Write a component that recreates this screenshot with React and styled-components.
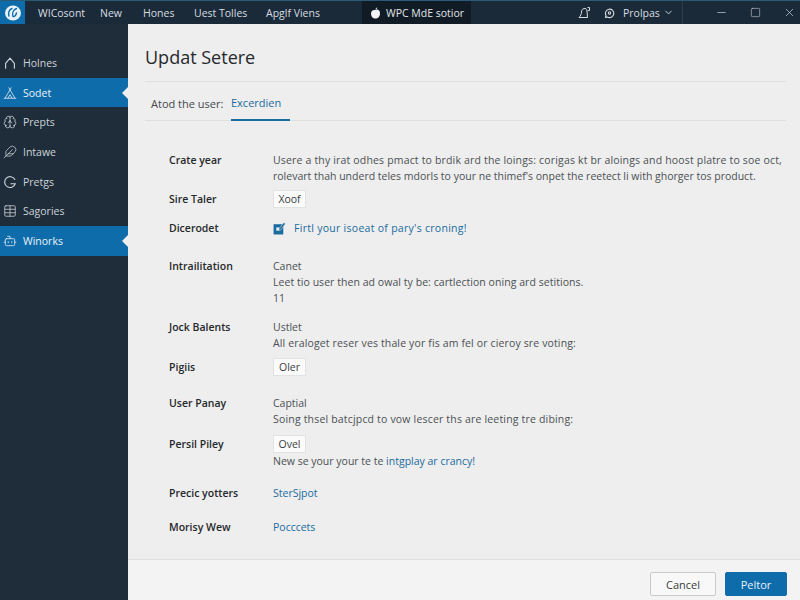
import styled, { createGlobalStyle } from 'styled-components';
import { Bot, Brain, ChevronDown, Feather, Minus, Square, Table, Tent, X } from 'lucide-react';

const GlobalStyle = createGlobalStyle`
  html, body {
    margin: 0;
    padding: 0;
    height: 100%;
    overflow: hidden;
  }
  body {
    font-family: "Open Sans", "Noto Sans", "Liberation Sans", sans-serif;
    background: #eeeeee;
  }
`;

const Shell = styled.div`
  width: 800px;
  height: 600px;
  display: flex;
  flex-direction: column;
  overflow: hidden;
`;

const TopBar = styled.header`
  height: 24px;
  flex: none;
  box-sizing: border-box;
  display: flex;
  align-items: stretch;
  background: #1b2a38;
  border-top: 1px solid #2a5a76;
  color: #d6dde3;
  font-size: 10.5px;
`;

const LogoBox = styled.div`
  width: 25px;
  flex: none;
  background: #0f6cab;
  display: flex;
  align-items: center;
  justify-content: center;
`;

const TopMenu = styled.nav`
  display: flex;
  flex: none;
  align-items: center;
  padding-left: 13px;
  width: 337px;
  box-sizing: border-box;
`;

const TopLink = styled.span`
  width: ${p => p.$w}px;
  white-space: nowrap;
`;

const DarkTab = styled.div`
  width: 109px;
  flex: none;
  background: #101b26;
  display: flex;
  align-items: center;
  gap: 5px;
  padding-left: 8px;
  box-sizing: border-box;
  white-space: nowrap;
  color: #e2e7eb;
`;

const TopRight = styled.div`
  flex: 1;
  display: flex;
  align-items: center;
  padding-left: 107px;
  color: #d6dde3;
`;

const IconSlot = styled.span`
  display: flex;
  margin-left: ${p => p.$left || 0}px;
`;

const ProfileName = styled.span`
  margin-left: 8px;
  white-space: nowrap;
`;

const BarDivider = styled.span`
  align-self: stretch;
  width: 1px;
  background: #2b3c4b;
  margin-left: 8px;
`;

const WindowButtons = styled.div`
  display: flex;
  align-items: center;
  margin-left: 32px;
  gap: 22px;
`;

const Body = styled.div`
  flex: 1;
  display: flex;
  min-height: 0;
`;

const Sidebar = styled.aside`
  width: 128px;
  flex: none;
  background: #1f2c39;
  padding-top: 24px;
  box-sizing: border-box;
`;

const SideItem = styled.div`
  position: relative;
  height: 29.7px;
  display: flex;
  align-items: center;
  gap: 6px;
  padding-left: 3px;
  font-size: 10.5px;
  color: ${p => (p.$active ? '#e8f2f9' : '#ccd4da')};
  background: ${p => (p.$active ? '#0f6cab' : 'transparent')};

  ${p => p.$active && `
    &::after {
      content: '';
      position: absolute;
      right: 0;
      top: 50%;
      margin-top: -6px;
      border: 6px solid transparent;
      border-right-color: #eeeeee;
      border-left-width: 0;
    }
  `}
`;

const Main = styled.main`
  flex: 1;
  display: flex;
  flex-direction: column;
  min-width: 0;
`;

const Content = styled.div`
  flex: 1;
  padding: 0 14px 0 17px;
  min-height: 0;
`;

const Title = styled.h1`
  margin: 0;
  height: 58px;
  display: flex;
  align-items: center;
  padding-top: 9px;
  box-sizing: border-box;
  font-size: 18px;
  font-weight: 400;
  color: #26292c;
  border-bottom: 1px solid #dfdfdf;
`;

const Tabs = styled.div`
  height: 39px;
  box-sizing: border-box;
  display: flex;
  align-items: stretch;
  border-bottom: 1px solid #dfdfdf;
  font-size: 11px;
`;

const TabLabel = styled.span`
  width: 86px;
  padding: 4px 0 0 6px;
  box-sizing: border-box;
  display: flex;
  align-items: center;
  color: #44484b;
`;

const ActiveTab = styled.span`
  width: 59px;
  box-sizing: content-box;
  padding-top: 4px;
  display: flex;
  align-items: center;
  color: #1a6b9e;
  border-bottom: 2px solid #1a6b9e;
  margin-bottom: -1px;
`;

const Form = styled.div`
  padding: 31px 0 0 24px;
  font-size: 10.5px;
`;

const Row = styled.div`
  display: grid;
  grid-template-columns: 104px 1fr;
  margin-top: ${p => p.$top || 0}px;
`;

const Label = styled.div`
  color: #25282b;
  font-weight: 600;
  line-height: 16px;
  white-space: nowrap;
  padding-top: ${p => p.$pad || 0}px;
`;

const Value = styled.div`
  color: #4c5054;
  line-height: 16px;
  white-space: nowrap;
`;

const Line = styled.span`
  display: block;
  letter-spacing: ${p => p.$ls || 0}px;
`;

const SmallBox = styled.span`
  display: inline-flex;
  align-items: center;
  justify-content: center;
  width: 33px;
  height: 18px;
  background: #fbfbfb;
  border: 1px solid #e2e2e2;
  box-sizing: border-box;
  color: #3b3e41;
`;

const LinkText = styled.span`
  color: #1a6b9e;
`;

const IconLink = styled.div`
  display: flex;
  align-items: center;
  gap: 8px;
  line-height: 16px;
  color: #1a6b9e;
  letter-spacing: 0.28px;
`;

const Footer = styled.footer`
  height: 41px;
  flex: none;
  background: #f3f3f3;
  border-top: 1px solid #dedede;
  display: flex;
  align-items: flex-start;
  justify-content: flex-end;
  gap: 9px;
  padding: 12px 13px 0 0;
  box-sizing: border-box;
`;

const Button = styled.button`
  width: ${p => p.$w}px;
  height: 24px;
  font: inherit;
  font-size: 11px;
  padding: 0;
  border-radius: 2px;
  border: 1px solid ${p => (p.$primary ? '#0f6cab' : '#c9c9c9')};
  background: ${p => (p.$primary ? '#0f6cab' : '#f8f8f8')};
  color: ${p => (p.$primary ? '#e6f1f8' : '#3a3d40')};
`;

const Logo = () => (
  <svg width="18" height="18" viewBox="0 0 18 18" fill="none">
    <ellipse cx="9" cy="9" rx="8" ry="7.5" fill="#e8f2f9" />
    <path d="M8 4.500C5 5.500 4 9 5 12" stroke="#0f6cab" strokeWidth="1.4" strokeLinecap="round" />
    <path d="M12.500 4.500C9 6 8 9.500 9 12.500C10.500 13 12 11 12.500 9" stroke="#0f6cab" strokeWidth="1.4" strokeLinecap="round" />
  </svg>
);

const HomeIcon = () => (
  <svg width="14" height="14" viewBox="0 0 16 16" fill="none" stroke="#ccd4da" strokeWidth="1.3">
    <path d="M3 14V8.500L8 2.500L13 8.500V14" strokeLinecap="round" strokeLinejoin="round" />
  </svg>
);

const RingIcon = () => (
  <svg width="14" height="14" viewBox="0 0 16 16" fill="none" stroke="#ccd4da" strokeWidth="1.3">
    <path d="M13.500 5A6.200 6.200 0 1 0 14 10L9 10" strokeLinecap="round" />
  </svg>
);

const BellNote = () => (
  <svg width="13" height="13" viewBox="0 0 13 13" fill="none" stroke="#d6dde3" strokeWidth="1">
    <path d="M1 11.500H9.500L9 5C9 3 7.500 2 6 2.500C4.500 3 3.500 4 3.500 6C3.500 8 2.500 10 1 11.500Z" strokeLinejoin="round" />
    <path d="M9.500 1.500H11.500V4.500H10" />
  </svg>
);

const ChatRing = () => (
  <svg width="12" height="12" viewBox="0 0 12 12" fill="none" stroke="#d6dde3" strokeWidth="1.1">
    <path d="M2.500 10.500L3 8.500A4.200 4.200 0 1 1 4.500 10Z" strokeLinejoin="round" />
    <circle cx="6.500" cy="6" r="1.200" />
  </svg>
);

const AppMark = () => (
  <svg width="11" height="12" viewBox="0 0 11 12" fill="#f2f4f6">
    <path d="M5.500 3C7 2 10 2.500 10 6.500C10 9.500 8 11.500 5.500 11.500C3 11.500 1 9.500 1 6.500C1 3.500 3.500 2.500 5.500 3Z" />
    <path d="M5.500 2.500C5.500 1.500 6.200 .7 7.200 .5C7.200 1.500 6.500 2.300 5.500 2.500Z" />
  </svg>
);

const EditSquare = () => (
  <svg width="13" height="14" viewBox="0 0 12 13">
    <rect x="0.500" y="3" width="9" height="9.500" fill="#1a6b9e" />
    <rect x="3" y="6" width="3" height="3" fill="#eeeeee" />
    <path d="M5 8L10 1.500L11.500 2.500L7 8.500Z" fill="#1a6b9e" stroke="#eeeeee" strokeWidth=".5" />
  </svg>
);

const menu = [
  { label: 'Holnes', icon: <HomeIcon /> },
  { label: 'Sodet', icon: <Tent size={14} strokeWidth={1.3} />, active: true },
  { label: 'Prepts', icon: <Brain size={14} strokeWidth={1.3} /> },
  { label: 'Intawe', icon: <Feather size={14} strokeWidth={1.3} /> },
  { label: 'Pretgs', icon: <RingIcon /> },
  { label: 'Sagories', icon: <Table size={14} strokeWidth={1.3} /> },
  { label: 'Winorks', icon: <Bot size={14} strokeWidth={1.3} />, active: true },
];

export default function App() {
  return (
    <Shell>
      <GlobalStyle />
      <TopBar>
        <LogoBox><Logo /></LogoBox>
        <TopMenu>
          <TopLink $w={62}>WICosont</TopLink>
          <TopLink $w={43}>New</TopLink>
          <TopLink $w={51}>Hones</TopLink>
          <TopLink $w={72}>Uest Tolles</TopLink>
          <TopLink $w={60}>Apglf Viens</TopLink>
        </TopMenu>
        <DarkTab><AppMark />WPC MdE sotior</DarkTab>
        <TopRight>
          <BellNote />
          <IconSlot $left={12}><ChatRing /></IconSlot>
          <ProfileName>Prolpas</ProfileName>
          <IconSlot $left={3}><ChevronDown size={11} /></IconSlot>
          <BarDivider />
          <WindowButtons>
            <Minus size={13} strokeWidth={1.2} />
            <Square size={11} strokeWidth={1.2} />
            <X size={13} strokeWidth={1.2} />
          </WindowButtons>
        </TopRight>
      </TopBar>
      <Body>
        <Sidebar>
          {menu.map(item => (
            <SideItem key={item.label} $active={item.active}>
              {item.icon}
              {item.label}
            </SideItem>
          ))}
        </Sidebar>
        <Main>
          <Content>
            <Title>Updat Setere</Title>
            <Tabs>
              <TabLabel>Atod the user:</TabLabel>
              <ActiveTab>Excerdien</ActiveTab>
            </Tabs>
            <Form>
              <Row>
                <Label>Crate year</Label>
                <Value>
                  <Line $ls={0.17}>Usere a thy irat odhes pmact to brdik ard the loings: corigas kt br aloings and hoost platre to soe oct,</Line>
                  <Line>rolevart thah underd teles mdorls to your ne thimef's onpet the reetect li with ghorger tos product.</Line>
                </Value>
              </Row>
              <Row $top={6}>
                <Label $pad={1}>Sire Taler</Label>
                <Value><SmallBox>Xoof</SmallBox></Value>
              </Row>
              <Row $top={12}>
                <Label>Dicerodet</Label>
                <IconLink><EditSquare />Firtl your isoeat of pary's croning!</IconLink>
              </Row>
              <Row $top={22}>
                <Label>Intrailitation</Label>
                <Value>
                  <Line>Canet</Line>
                  <Line $ls={0.05}>Leet tio user then ad owal ty be: cartlection oning ard setitions.</Line>
                  <Line>11</Line>
                </Value>
              </Row>
              <Row $top={13}>
                <Label>Jock Balents</Label>
                <Value>
                  <Line>Ustlet</Line>
                  <Line $ls={0.14}>All eraloget reser ves thale yor fis am fel or cieroy sre voting:</Line>
                </Value>
              </Row>
              <Row $top={7}>
                <Label $pad={1}>Pigiis</Label>
                <Value><SmallBox>Oler</SmallBox></Value>
              </Row>
              <Row $top={19}>
                <Label>User Panay</Label>
                <Value>
                  <Line>Captial</Line>
                  <Line $ls={0.18}>Soing thsel batcjpcd to vow lescer ths are leeting tre dibing:</Line>
                </Value>
              </Row>
              <Row $top={8}>
                <Label $pad={1}>Persil Piley</Label>
                <Value>
                  <SmallBox>Ovel</SmallBox>
                  <Line>New se your your te te <LinkText>intgplay ar crancy!</LinkText></Line>
                </Value>
              </Row>
              <Row $top={16}>
                <Label>Precic yotters</Label>
                <Value><LinkText>SterSjpot</LinkText></Value>
              </Row>
              <Row $top={18}>
                <Label>Morisy Wew</Label>
                <Value><LinkText>Pocccets</LinkText></Value>
              </Row>
            </Form>
          </Content>
          <Footer>
            <Button $w={66}>Cancel</Button>
            <Button $w={62} $primary>Peltor</Button>
          </Footer>
        </Main>
      </Body>
    </Shell>
  );
}
